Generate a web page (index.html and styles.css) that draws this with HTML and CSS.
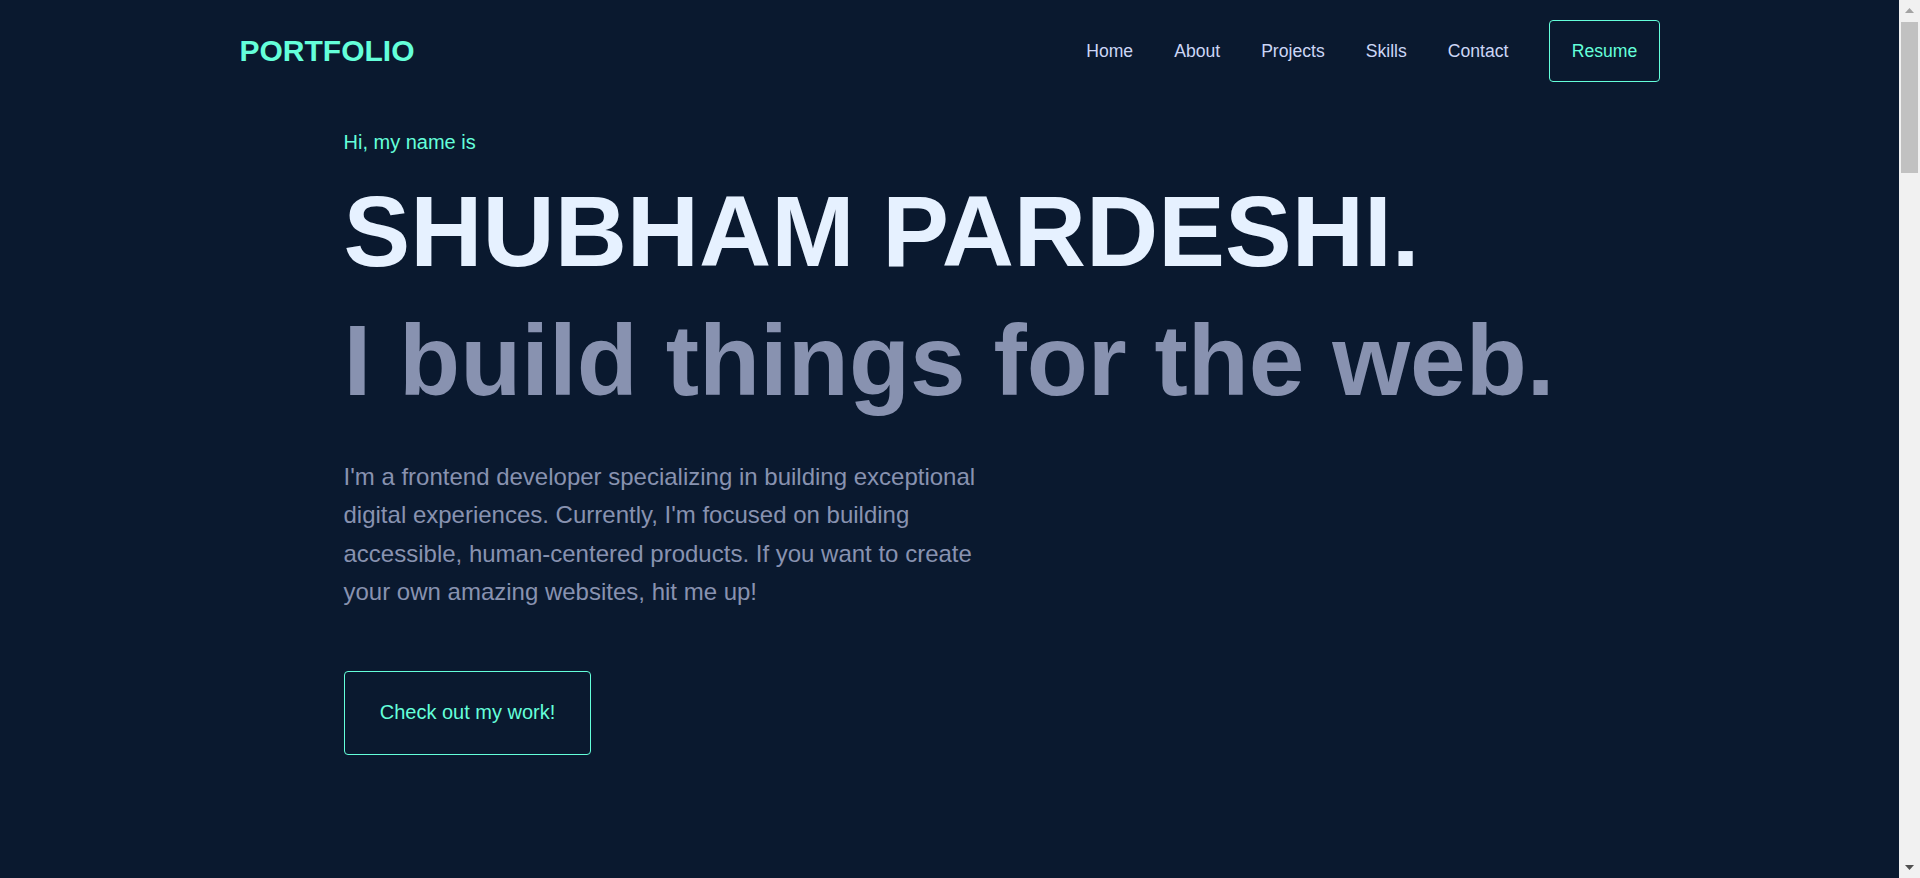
FILE: index.html
```html
<!DOCTYPE html>
<html lang="en">
<head>
<meta charset="utf-8">
<title>Portfolio</title>
<link rel="stylesheet" href="styles.css">
</head>
<body>
<header class="site-header">
  <nav class="nav container">
    <a class="logo" href="#home">PORTFOLIO</a>
    <ul class="nav-links">
      <li><a href="#home">Home</a></li>
      <li><a href="#about">About</a></li>
      <li><a href="#projects">Projects</a></li>
      <li><a href="#skills">Skills</a></li>
      <li><a href="#contact">Contact</a></li>
      <li><a class="btn-outline btn-resume" href="#resume">Resume</a></li>
    </ul>
  </nav>
</header>
<main>
  <section class="hero container" id="home">
    <div class="hero-inner">
      <p class="hero-hi">Hi, my name is</p>
      <h1 class="hero-name">SHUBHAM PARDESHI.</h1>
      <h2 class="hero-tagline">I build things for the web.</h2>
      <p class="hero-desc">I'm a frontend developer specializing in building exceptional digital experiences. Currently, I'm focused on building accessible, human-centered products. If you want to create your own amazing websites, hit me up!</p>
      <a class="btn-outline btn-work" href="#projects">Check out my work!</a>
    </div>
  </section>
  <section class="section container" id="about"></section>
  <section class="section container" id="projects"></section>
  <section class="section container" id="skills"></section>
  <section class="section container" id="contact"></section>
</main>
<div class="fake-scrollbar" aria-hidden="true">
  <div class="sb-btn">
    <svg width="9" height="5" viewBox="0 0 9 5"><polygon points="4.5,0 9,5 0,5" fill="#a3a3a3"/></svg>
  </div>
  <div class="sb-track"><div class="sb-thumb"></div></div>
  <div class="sb-btn">
    <svg width="9" height="5" viewBox="0 0 9 5"><polygon points="0,0 9,0 4.5,5" fill="#505050"/></svg>
  </div>
</div>
</body>
</html>
```
FILE: styles.css
```css
* {
  box-sizing: border-box;
}

html, body {
  margin: 0;
  padding: 0;
}

body {
  background: #0a192f;
  color: #8892b0;
  font-family: "Liberation Sans", Arial, sans-serif;
  padding-right: 21px;
}

a {
  text-decoration: none;
  color: inherit;
}

.container {
  max-width: 1420px;
  margin: 0 auto;
}

.nav {
  height: 102px;
  display: flex;
  align-items: center;
  justify-content: space-between;
}

.logo {
  color: #64ffda;
  font-weight: 700;
  font-size: 30px;
}

.nav-links {
  list-style: none;
  margin: 0;
  padding: 0;
  display: flex;
  align-items: center;
  gap: 41px;
}

.nav-links a {
  color: #ccd6f6;
  font-size: 17.6px;
}

.btn-outline {
  display: inline-block;
  border: 1px solid #64ffda;
  border-radius: 4px;
  color: #64ffda;
}

.nav-links .btn-resume {
  color: #64ffda;
  padding: 19.2px 21.3px;
}

.hero {
  min-height: 820px;
}

.hero-inner {
  padding: 29px 0 0 104px;
}

.hero-hi {
  margin: 0;
  color: #64ffda;
  font-size: 20px;
}

.hero-name {
  margin: 22px 0 0;
  color: #e6f1ff;
  font-size: 100px;
  line-height: 1.1;
  font-weight: 700;
}

.hero-tagline {
  margin: 19px 0 0;
  color: #8892b0;
  font-size: 100px;
  line-height: 1.1;
  font-weight: 700;
}

.hero-desc {
  margin: 43px 0 0;
  max-width: 660px;
  font-size: 24px;
  line-height: 1.6;
  color: #8892b0;
}

.btn-work {
  margin-top: 59px;
  padding: 29.5px 35.2px;
  font-size: 20px;
}

.section {
  min-height: 985px;
}

.fake-scrollbar {
  position: fixed;
  top: 0;
  right: 0;
  width: 21px;
  height: 100vh;
  background: #f1f1f1;
  display: flex;
  flex-direction: column;
}

.sb-btn {
  height: 21px;
  flex: none;
  display: flex;
  align-items: center;
  justify-content: center;
}

.sb-btn svg {
  display: block;
}

.sb-track {
  flex: 1;
  padding: 1px 2px 0;
}

.sb-thumb {
  height: 151px;
  background: #c1c1c1;
}
```
